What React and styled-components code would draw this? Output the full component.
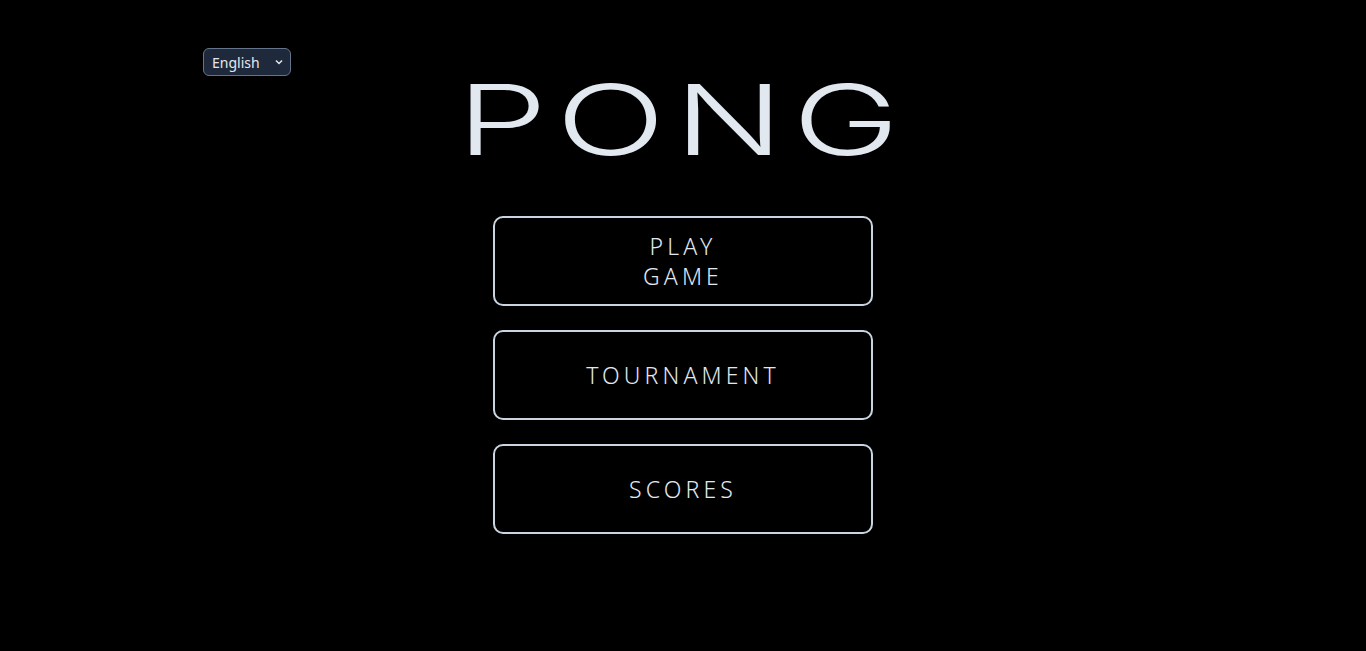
import React, { useState } from "react";
import styled, { createGlobalStyle } from "styled-components";

const GlobalStyle = createGlobalStyle`
  html, body {
    margin: 0;
    padding: 0;
    background: #000;
    color: #e2e8f0;
    font-family: "Noto Sans", "DejaVu Sans", sans-serif;
  }
`;

const Page = styled.div`
  min-height: 651px;
  background: #000;
`;

const Container = styled.div`
  max-width: 960px;
  margin: 0 auto;
  padding-top: 48px;
  position: relative;
`;

const LangSelect = styled.select`
  position: absolute;
  top: 48px;
  left: 0;
  width: 88px;
  height: 28px;
  padding: 0 6px 0 8px;
  background: #1e293b;
  color: #e2e8f0;
  border: 1px solid #64748b;
  border-radius: 6px;
  font-family: "Noto Sans", "DejaVu Sans", sans-serif;
  font-size: 14px;
  appearance: none;
  background-image: url("data:image/svg+xml;utf8,<svg xmlns='http://www.w3.org/2000/svg' width='10' height='10' viewBox='0 0 10 10'><path d='M2 3.5l3 3 3-3' fill='none' stroke='%23e2e8f0' stroke-width='1.5'/></svg>");
  background-repeat: no-repeat;
  background-position: right 6px center;
`;

const Title = styled.h1`
  margin: 0;
  height: 120px;
  padding-top: 24px;
  box-sizing: border-box;
  display: flex;
  align-items: center;
  justify-content: center;
  font-family: "Inter", "DejaVu Sans", sans-serif;
  font-weight: 350;
  font-size: 98px;
  line-height: 1;
  color: #e2e8f0;
`;

const TitleText = styled.span`
  display: inline-block;
  transform: scaleX(1.47);
  letter-spacing: 6px;
`;

const Menu = styled.nav`
  display: flex;
  flex-direction: column;
  align-items: center;
  gap: 24px;
  margin-top: 48px;
`;

const MenuButton = styled.button`
  width: 380px;
  height: 90px;
  background: transparent;
  border: 2px solid #cbd5e1;
  border-radius: 10px;
  color: #e2e8f0;
  font-family: "Noto Sans", "DejaVu Sans", sans-serif;
  font-weight: 300;
  font-size: 23px;
  line-height: 30px;
  letter-spacing: 0.18em;
  text-transform: uppercase;
  cursor: pointer;
  padding: 0 ${(p) => (p.$narrow ? "140px" : "16px")};
`;

export default function App() {
  const [lang, setLang] = useState("en");

  return (
    <Page>
      <GlobalStyle />
      <Container>
        <LangSelect value={lang} onChange={(e) => setLang(e.target.value)}>
          <option value="en">English</option>
          <option value="fr">Français</option>
          <option value="es">Español</option>
        </LangSelect>
        <Title>
          <TitleText>PONG</TitleText>
        </Title>
        <Menu>
          <MenuButton $narrow>Play Game</MenuButton>
          <MenuButton>Tournament</MenuButton>
          <MenuButton>Scores</MenuButton>
        </Menu>
      </Container>
    </Page>
  );
}
